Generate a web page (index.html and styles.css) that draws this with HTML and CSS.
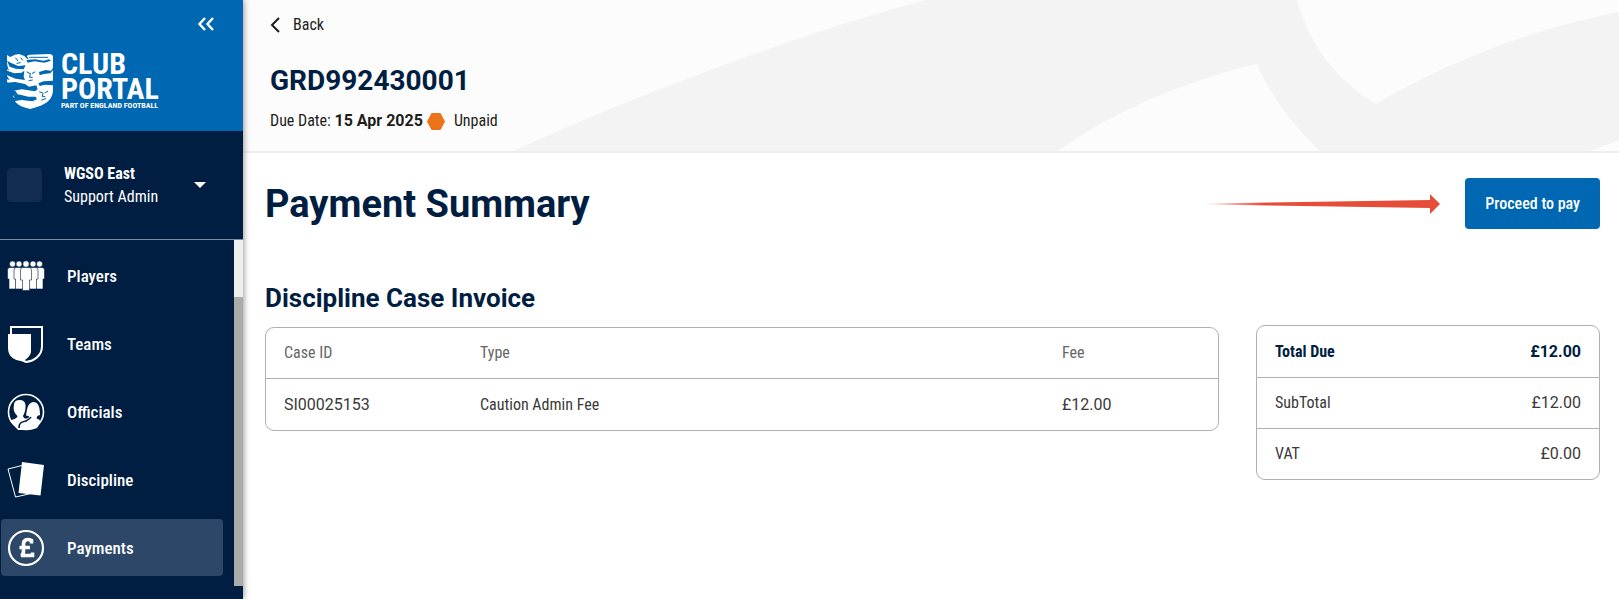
FILE: index.html
```html
<!DOCTYPE html>
<html lang="en">
<head>
  <meta charset="UTF-8">
  <meta name="viewport" content="width=device-width, initial-scale=1.0">
  <title>Payment Summary - Club Portal</title>
  <link rel="stylesheet" href="styles.css">
</head>
<body>
  <aside class="sidebar">
    <div class="brand">
      <button class="collapse" type="button" aria-label="Collapse menu">
        <svg width="18" height="16" viewBox="0 0 18 16" fill="none" stroke="#fff" stroke-width="2.4"><path d="M8 2 2.500 8 8 14M16 2 10.500 8 16 14"/></svg>
      </button>
      <a class="logo" href="#">
        <svg width="46" height="55" viewBox="0 0 138 165">
          <path fill="#fff" d="M0 3 10 9 24 2 36 0 52 6 60 14H66L60 8Q60 2 68 2L126 0Q138 0 138 10V106C138 142 112 154 70 165 46 160 30 152 24 142L32 138 18 128 22 120 34 124 26 112 6 100 10 94 0 84V76L8 78 0 66V46L6 50 2 38 0 28Z"/>
          <g fill="#0067b3">
            <path d="M0 20 14 28 34 36 56 34 50 46 26 44 8 38Z"/>
            <path d="M0 50 22 58 44 56 52 50 50 68 54 78 26 74 0 64Z"/>
            <path d="M0 86 24 84 54 90 66 98 88 94 92 106 84 112 44 106 20 110 4 104Z"/>
            <path d="M96 54 116 48 132 50 138 42V48L130 58 110 60 98 64Z"/>
            <path d="M94 88 110 82 138 80V94L114 92 98 96Z"/>
            <path d="M18 120 40 122 64 128 86 128 90 136 76 142 44 138 26 140Z"/>
            <path d="M58 18 84 16 110 20 126 16 132 20 112 26 82 22 62 26Z"/>
          </g>
          <g fill="none" stroke="#0067b3" stroke-width="3" stroke-linecap="round" stroke-linejoin="round">
            <path d="M68 10H122M26 12 32 20M42 12 46 18M30 28 40 26M60 54 68 58M76 58 84 54M70 58 68 70 76 70M66 80 76 78M98 114 106 116M114 116 122 112M108 118 106 128 114 128M104 138 116 134"/>
          </g>
        </svg>
        <span class="logo-text">
          <span class="logo-name">Club<br>Portal</span>
          <span class="logo-sub">Part of England Football</span>
        </span>
      </a>
    </div>

    <button class="account" type="button">
      <span class="avatar"></span>
      <span class="account-text"><b>WGSO East</b><br>Support Admin</span>
      <svg width="12" height="6" viewBox="0 0 12 6"><path fill="#fff" d="M0 0H12L6 6Z"/></svg>
    </button>

    <div class="menu">
      <nav>
        <a href="#">
          <svg width="38" height="38" viewBox="0 0 38 38" fill="#fff" stroke="#001e41" stroke-width=".6">
            <circle cx="5.500" cy="7" r="3"/><circle cx="32.500" cy="7" r="3"/>
            <path d="M3 10.500H8Q10 10.500 10 13V22H9V32H2V22H.5V13Q.5 10.500 3 10.500Z"/>
            <path d="M30 10.500H35Q37.500 10.500 37.500 13V22H36V32H29V22H28V13Q28 10.500 30 10.500Z"/>
            <circle cx="12" cy="7" r="3"/><circle cx="26" cy="7" r="3"/>
            <path d="M9.500 10.500H14.500Q17 10.500 17 13V32H8.500V22H7V13Q7 10.500 9.500 10.500Z"/>
            <path d="M23.500 10.500H28.500Q31 10.500 31 13V22H29.500V32H21V13Q21 10.500 23.500 10.500Z"/>
            <circle cx="19" cy="7" r="3.200"/>
            <path d="M16 10.500H22Q24.500 10.500 24.500 13V23H22.500V33.500H15.500V23H13.500V13Q13.500 10.500 16 10.500Z"/>
          </svg>
          Players
        </a>
        <a href="#">
          <svg width="38" height="38" viewBox="0 0 38 38">
            <path fill="none" stroke="#fff" stroke-width="2" d="M4 9V2H35V21C35 31 27 36 19 37L15 35"/>
            <path fill="#fff" d="M1 9H24V27C23 32 19 34 16 36.500 6 35 1 31 1 23Z"/>
          </svg>
          Teams
        </a>
        <a href="#">
          <svg width="38" height="38" viewBox="0 0 38 38">
            <circle cx="19" cy="19" r="17.500" fill="none" stroke="#fff" stroke-width="1.600"/>
            <path fill="#fff" d="M3 28C6 26 10 26 10.500 23 7 20 6 16 7 12 7 8 10 7 13 7 17 7 19 10 18.500 14 18.500 18 17 21 16 23 17 26 19 26 21 25 23 24 22.500 23 19 22.500 20 18 20 10 26 9 31 9 33 13 33 22 32 22.500 29 22.500 30 26 33 26 35 28 30 35 25 37 19 37 11 37 6 34 3 28Z"/>
            <path fill="none" stroke="#001e41" stroke-width="1.600" d="M12 35C12 30 14 29 19 28 21 27 23 26 24 24"/>
          </svg>
          Officials
        </a>
        <a href="#">
          <svg width="38" height="38" viewBox="0 0 38 38">
            <path fill="none" stroke="#fff" d="M15 4.500 1 8 8.500 36 24 32.500"/>
            <path fill="#fff" d="M15 1 37 4 33.500 34.500 11.500 32Z"/>
          </svg>
          Discipline
        </a>
        <a class="active" href="#">
          <svg width="38" height="38" viewBox="0 0 38 38">
            <circle cx="19" cy="19" r="17" fill="none" stroke="#fff" stroke-width="2.200"/>
            <path fill="none" stroke="#fff" stroke-width="3.600" d="M24.500 14.500V11.500C21 9.500 16.500 10.500 16.500 15V22C16.500 25 15.500 26 14 26.500H25.500V23.500M12.500 18.500H23"/>
          </svg>
          Payments
        </a>
      </nav>
      <div class="scrollbar"><div class="thumb"></div></div>
    </div>
  </aside>

  <main>
    <header class="invoice-header">
      <svg class="pattern" viewBox="0 0 1376 151" preserveAspectRatio="xMaxYMin slice" fill="#f3f3f3">
        <path d="M270 151C370 105 540 38 682 0H1054C1066 44 1092 79 1133 104C1200 64 1290 28 1376 12V140L1347 151H1077C1050 125 1028 97 1014 64L1005 66C930 86 870 112 815 151Z"/>
      </svg>
      <a class="back" href="#">
        <svg width="10" height="16" viewBox="0 0 10 16" fill="none" stroke="#1d1d1b" stroke-width="2"><path d="M9 1 2 8 9 15"/></svg>
        Back
      </a>
      <h2>GRD992430001</h2>
      <p class="due">
        <span>Due Date: <b>15 Apr 2025</b></span>
        <svg width="18" height="17" viewBox="0 0 18 17"><path fill="#ec7319" d="M4.500 0H13.500L18 8.500 13.500 17H4.500L0 8.500Z"/></svg>
        <span class="status">Unpaid</span>
      </p>
    </header>

    <section class="content">
      <div class="title-row">
        <h1>Payment Summary</h1>
        <svg class="pointer" width="236" height="20" viewBox="0 0 236 20">
          <defs>
            <linearGradient id="fade">
              <stop offset="0" stop-color="#e64d38" stop-opacity="0"/>
              <stop offset=".25" stop-color="#e64d38"/>
            </linearGradient>
          </defs>
          <path fill="url(#fade)" d="M0 9.500 226 6V0L236 10 226 20V14L0 10.500Z"/>
        </svg>
        <button class="pay" type="button">Proceed to pay</button>
      </div>

      <div class="columns">
        <div class="invoice">
          <h2>Discipline Case Invoice</h2>
          <table class="card">
            <thead>
              <tr><th class="col-id">Case ID</th><th>Type</th><th class="col-fee">Fee</th></tr>
            </thead>
            <tbody>
              <tr><td class="num">SI00025153</td><td>Caution Admin Fee</td><td class="num">£12.00</td></tr>
            </tbody>
          </table>
        </div>
        <table class="card totals">
          <tbody>
            <tr class="total"><th>Total Due</th><td class="num">£12.00</td></tr>
            <tr><th>SubTotal</th><td class="num">£12.00</td></tr>
            <tr><th>VAT</th><td class="num">£0.00</td></tr>
          </tbody>
        </table>
      </div>
    </section>
  </main>
</body>
</html>
```

FILE: styles.css
```css
* {
  box-sizing: border-box;
}

body {
  margin: 0;
  display: flex;
  min-height: 100vh;
  font-family: "Roboto Condensed", Roboto, sans-serif;
  font-size: 16px;
  line-height: 24px;
  color: #1d1d1b;
  background-color: #fff;
}

h1, h2, p {
  margin: 0;
}

h1, h2 {
  font-family: Roboto, sans-serif;
  color: #001e41;
}

h2 {
  font-size: 26px;
  line-height: 32px;
}

a {
  color: inherit;
  text-decoration: none;
}

button {
  font: inherit;
  color: #fff;
  border: none;
  cursor: pointer;
}

svg {
  flex: none;
}

/* Sidebar */
.sidebar {
  flex: none;
  width: 243px;
  display: flex;
  flex-direction: column;
  color: #fff;
  background-color: #001e41;
  box-shadow: 1px 0 6px rgba(0, 0, 0, 0.4);
  z-index: 1;
}

.brand {
  display: flex;
  flex-direction: column;
  height: 131px;
  padding: 16px 28px 0 7px;
  background-color: #0067b3;
}

.collapse {
  display: flex;
  align-self: flex-end;
  padding: 0;
  background: none;
}

.logo {
  display: flex;
  align-items: center;
  gap: 8px;
  margin-top: 19px;
}

.logo-text {
  display: flex;
  flex-direction: column;
  text-transform: uppercase;
  font-weight: bold;
}

.logo-name {
  font-size: 30px;
  line-height: 25px;
}

.logo-sub {
  font-size: 8px;
  line-height: 10px;
  white-space: nowrap;
}

.account {
  display: flex;
  align-items: center;
  height: 109px;
  padding: 0 37px 0 7px;
  text-align: left;
  line-height: 23px;
  background: none;
  border-bottom: 1px solid #7c8a9c;
}

.avatar {
  width: 35px;
  height: 34px;
  margin-right: 22px;
  border-radius: 4px;
  background-color: #112c50;
}

.account-text {
  flex: 1;
}

.menu {
  flex: 1;
  display: flex;
}

nav {
  flex: 1;
  display: flex;
  flex-direction: column;
  gap: 11px;
  padding: 7px 11px 0 1px;
}

nav a {
  display: flex;
  align-items: center;
  gap: 22px;
  height: 57px;
  padding-left: 6px;
  border-radius: 4px;
  font-size: 17px;
  font-weight: 500;
}

nav .active {
  background-color: #2d4768;
}

.scrollbar {
  width: 9px;
  margin-bottom: 13px;
  padding-top: 57px;
  background-color: #eee;
}

.thumb {
  height: 100%;
  background-color: #ababab;
}

/* Main area */
main {
  flex: 1;
  min-width: 0;
}

.invoice-header {
  position: relative;
  padding: 13px 27px 18px;
  background-color: #fcfcfc;
  border-bottom: 2px solid #eee;
}

.pattern {
  position: absolute;
  inset: 0;
  width: 100%;
  height: 100%;
}

.back,
.invoice-header h2,
.due {
  position: relative;
}

.back {
  display: inline-flex;
  align-items: center;
  gap: 13px;
}

.invoice-header h2 {
  margin: 25px 0 12px;
  font-size: 28px;
}

.due {
  display: flex;
  align-items: center;
  gap: 4px;
}

.due b,
.num {
  font-family: Roboto, sans-serif;
}

.status {
  margin-left: 5px;
}

.content {
  padding: 25px 19px 20px 22px;
}

.title-row {
  display: flex;
  align-items: center;
}

h1 {
  flex: 1;
  font-size: 38px;
  line-height: 48px;
}

.pay {
  height: 51px;
  margin-left: 25px;
  padding: 0 20px;
  border-radius: 4px;
  font-weight: 500;
  background-color: #0067b3;
}

.columns {
  display: flex;
  align-items: flex-start;
  gap: 37px;
  margin-top: 53px;
}

.invoice {
  flex: 1;
}

.card {
  width: 100%;
  border: 1px solid #b0b0b0;
  border-radius: 9px;
  border-spacing: 0;
}

.card th,
.card td {
  height: 51px;
  padding: 0 18px;
  text-align: left;
  font-weight: normal;
  color: #3a3a38;
}

.invoice .card {
  margin-top: 13px;
  table-layout: fixed;
}

.invoice thead th {
  color: #666;
  border-bottom: 1px solid #b0b0b0;
}

.invoice .col-id {
  width: 196px;
}

.invoice .col-fee {
  width: 174px;
}

.totals {
  width: 344px;
  margin-top: 43px;
}

.totals tr + tr > * {
  border-top: 1px solid #b0b0b0;
}

.totals .num {
  text-align: right;
}

.totals .total > * {
  font-weight: bold;
  color: #001e41;
}
```
